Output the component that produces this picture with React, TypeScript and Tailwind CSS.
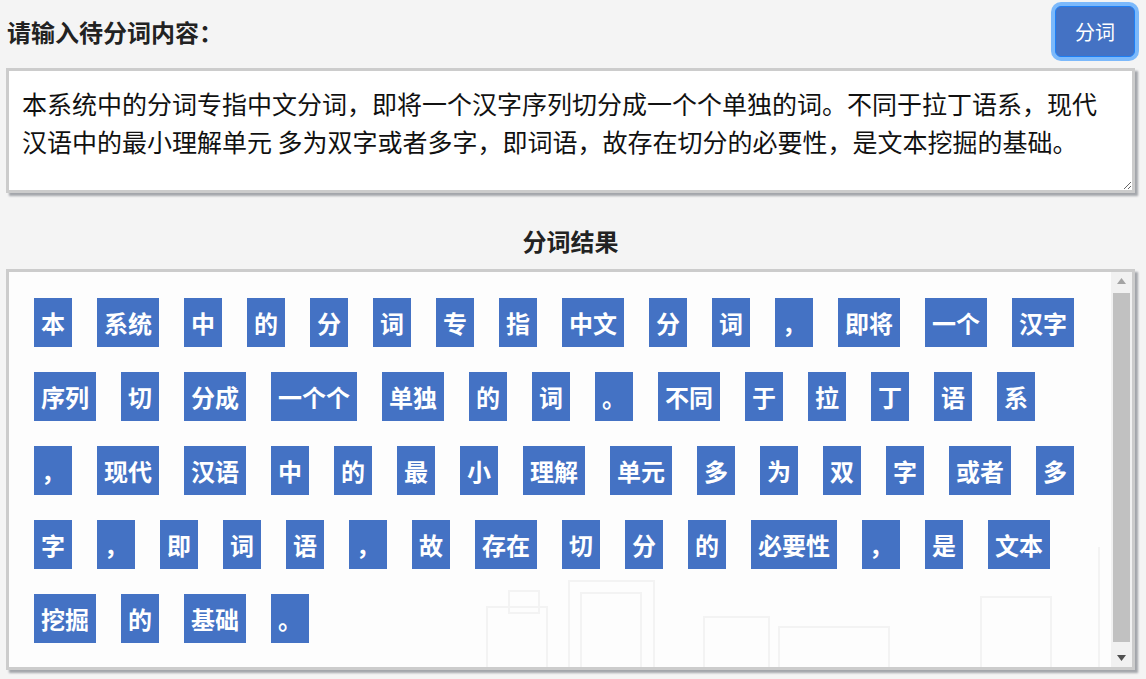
import React from "react";

const sourceText =
  "本系统中的分词专指中文分词，即将一个汉字序列切分成一个个单独的词。不同于拉丁语系，现代汉语中的最小理解单元 多为双字或者多字，即词语，故存在切分的必要性，是文本挖掘的基础。";

const tokens = [
  "本", "系统", "中", "的", "分", "词", "专", "指", "中文", "分", "词", "，", "即将", "一个", "汉字",
  "序列", "切", "分成", "一个个", "单独", "的", "词", "。", "不同", "于", "拉", "丁", "语", "系",
  "，", "现代", "汉语", "中", "的", "最", "小", "理解", "单元", "多", "为", "双", "字", "或者", "多",
  "字", "，", "即", "词", "语", "，", "故", "存在", "切", "分", "的", "必要性", "，", "是", "文本",
  "挖掘", "的", "基础", "。",
];

function CityBackdrop() {
  // faint line drawing of buildings behind the result panel
  return (
    <svg
      className="pointer-events-none absolute bottom-0 left-0"
      width="1110"
      height="120"
      viewBox="0 0 1110 120"
      fill="none"
      stroke="#f3f3f3"
      strokeWidth="2"
    >
      <rect x="478" y="60" width="60" height="70" />
      <rect x="500" y="44" width="30" height="22" />
      <rect x="560" y="34" width="85" height="100" />
      <rect x="572" y="46" width="60" height="90" />
      <rect x="695" y="70" width="65" height="70" />
      <rect x="770" y="80" width="110" height="50" />
      <rect x="972" y="50" width="70" height="80" />
      <line x1="1090" y1="0" x2="1090" y2="120" />
    </svg>
  );
}

function ScrollBar() {
  return (
    <div className="flex w-[21px] shrink-0 flex-col bg-[#f1f1f1] px-[2px]">
      <div className="flex h-[18px] items-center justify-center">
        <svg width="9" height="6" viewBox="0 0 9 6">
          <path d="M4.5 0L9 6H0z" fill="#a3a3a3" />
        </svg>
      </div>
      <div className="mt-[3px] mb-[7px] flex-1 bg-[#c1c1c1]" />
      <div className="flex h-[18px] items-center justify-center">
        <svg width="9" height="6" viewBox="0 0 9 6">
          <path d="M0 0h9L4.5 6z" fill="#505050" />
        </svg>
      </div>
    </div>
  );
}

export default function App() {
  return (
    <div
      className="min-h-screen w-full bg-[#f4f4f4] text-[#222]"
      style={{ fontFamily: '"Noto Sans CJK SC", "Noto Sans", sans-serif' }}
    >
      <div className="pl-[6px] pr-[11px] pt-[6px]">
        {/* Header */}
        <div className="flex items-center justify-between">
          <h2 className="pl-[1px] text-[24px] font-bold leading-[34px] text-[#222]">
            请输入待分词内容：
          </h2>
          <button className="h-[51px] w-[80px] rounded-[6px] border-[1.5px] border-[#1d7ff6] bg-[#4472c4] text-[20px] text-white shadow-[0_0_0_4px_#7cb9fb]">
            分词
          </button>
        </div>

        {/* Input */}
        <textarea
          className="mt-[11px] block h-[125px] w-full overflow-hidden border-[3px] border-[#cccccc] bg-white py-[13px] pl-[13px] pr-[13px] text-[25px] leading-[38.4px] text-[#111] shadow-[3px_3px_2px_#a3a6ab] outline-none"
          defaultValue={sourceText}
        />

        {/* Result title */}
        <h3 className="mt-[31px] text-center text-[24px] font-bold leading-[34px] text-[#222]">
          分词结果
        </h3>

        {/* Result panel */}
        <div className="mt-[11px] flex h-[401px] border-[3px] border-[#cccccc] bg-[#fdfdfd] shadow-[3px_3px_2px_#a3a6ab]">
          <div className="relative flex-1 overflow-hidden">
            <CityBackdrop />
            <div className="relative flex flex-wrap gap-[25px] px-[25px] pt-[26px]">
              {tokens.map((t, i) => (
                <span
                  key={i}
                  className="flex h-[49px] items-center bg-[#4472c4] px-[7px] text-[24px] font-bold leading-none text-white"
                >
                  {t}
                </span>
              ))}
            </div>
          </div>
          <ScrollBar />
        </div>
      </div>
    </div>
  );
}
